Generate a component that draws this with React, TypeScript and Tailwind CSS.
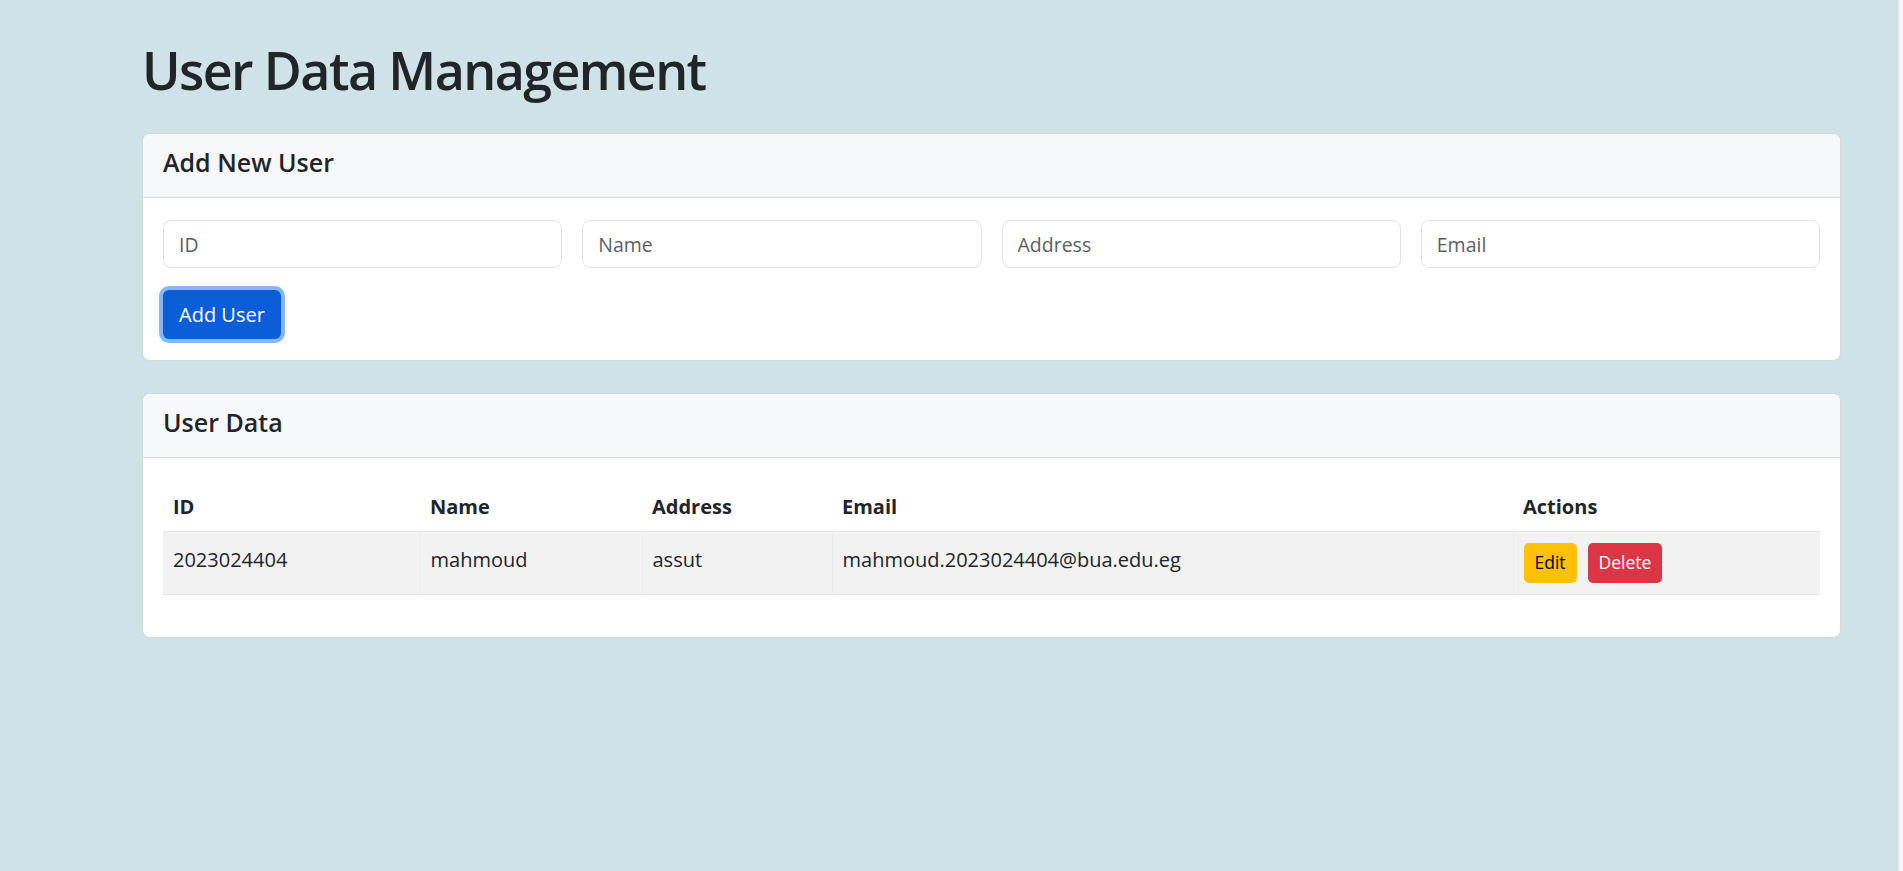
import React from "react";

type User = {
  id: string;
  name: string;
  address: string;
  email: string;
};

const users: User[] = [
  {
    id: "2023024404",
    name: "mahmoud",
    address: "assut",
    email: "mahmoud.2023024404@bua.edu.eg",
  },
];

const fields = ["ID", "Name", "Address", "Email"];

const CardHeader: React.FC<{ children: React.ReactNode }> = ({ children }) => (
  <div className="h-[64px] border-b border-[#dcdee1] bg-[#f7f8f9] px-5 pt-[13px]">
    <h5 className="text-[25px] leading-[30px] font-semibold text-[#212529]">
      {children}
    </h5>
  </div>
);

export default function App() {
  return (
    <div
      className="flex min-h-screen bg-[#cfe2e7] text-[#212529]"
      style={{ fontFamily: '"Open Sans", "Noto Sans", sans-serif' }}
    >
      <div className="flex-1">
        <div className="ml-[142px] w-[1699px] pt-[37px] pb-10">
          <h1 className="text-[52px] leading-[66px] font-semibold tracking-[-1.6px] mb-[30px]">
            User Data Management
          </h1>

          {/* Add user form */}
          <div className="rounded-[8px] border border-[#d6d9dc] bg-white overflow-hidden">
            <CardHeader>Add New User</CardHeader>
            <div className="px-5 pt-[22px] pb-[21px]">
              <div className="grid grid-cols-4 gap-5">
                {fields.map((f) => (
                  <input
                    key={f}
                    placeholder={f}
                    className="h-[48px] w-full rounded-[8px] border border-[#e1e4e8] bg-white px-[15px] text-[19.5px] text-[#212529] placeholder:text-[#5c5f63] outline-none"
                  />
                ))}
              </div>
              <button className="mt-[22px] h-[49px] rounded-[6px] bg-[#0b5ed7] px-[16px] text-[20px] text-white ring-4 ring-[#8ab6f9]">
                Add User
              </button>
            </div>
          </div>

          {/* User table */}
          <div className="mt-[32px] rounded-[8px] border border-[#d6d9dc] bg-white overflow-hidden">
            <CardHeader>User Data</CardHeader>
            <div className="px-5 pt-5 pb-[22px]">
              <table className="w-full table-fixed border-collapse mb-5 text-[20px]">
                <thead>
                  <tr className="h-[53px] border-b border-[#e6e7ea] text-left">
                    <th className="w-[257px] px-[10px] align-top pt-[14px] font-bold">ID</th>
                    <th className="w-[222px] px-[10px] align-top pt-[14px] font-bold">Name</th>
                    <th className="w-[190px] px-[10px] align-top pt-[14px] font-bold">Address</th>
                    <th className="w-[681px] px-[10px] align-top pt-[14px] font-bold">Email</th>
                    <th className="px-[10px] align-top pt-[14px] font-bold">Actions</th>
                  </tr>
                </thead>
                <tbody>
                  {users.map((u) => (
                    <tr key={u.id} className="h-[63px] border-b border-[#e6e7ea] bg-[#f2f2f2]">
                      <td className="px-[10px] align-top pt-[13px]">{u.id}</td>
                      <td className="px-[10px] align-top pt-[13px] border-l border-[#ececee]">{u.name}</td>
                      <td className="px-[10px] align-top pt-[13px] border-l border-[#ececee]">{u.address}</td>
                      <td className="px-[10px] align-top pt-[13px] border-l border-[#ececee]">{u.email}</td>
                      <td className="px-[10px] align-top pt-[11px] border-l border-[#ececee]">
                        <div className="flex gap-[11px]">
                          <button className="h-[40px] rounded-[5px] bg-[#ffc107] px-[11px] text-[17.5px] text-black">
                            Edit
                          </button>
                          <button className="h-[40px] rounded-[5px] bg-[#dc3545] px-[11px] text-[17.5px] text-white">
                            Delete
                          </button>
                        </div>
                      </td>
                    </tr>
                  ))}
                </tbody>
              </table>
            </div>
          </div>
        </div>
      </div>
      <div className="w-[5px] border-l border-[#e6e6e6] bg-[#f5f5f5]" />
    </div>
  );
}
